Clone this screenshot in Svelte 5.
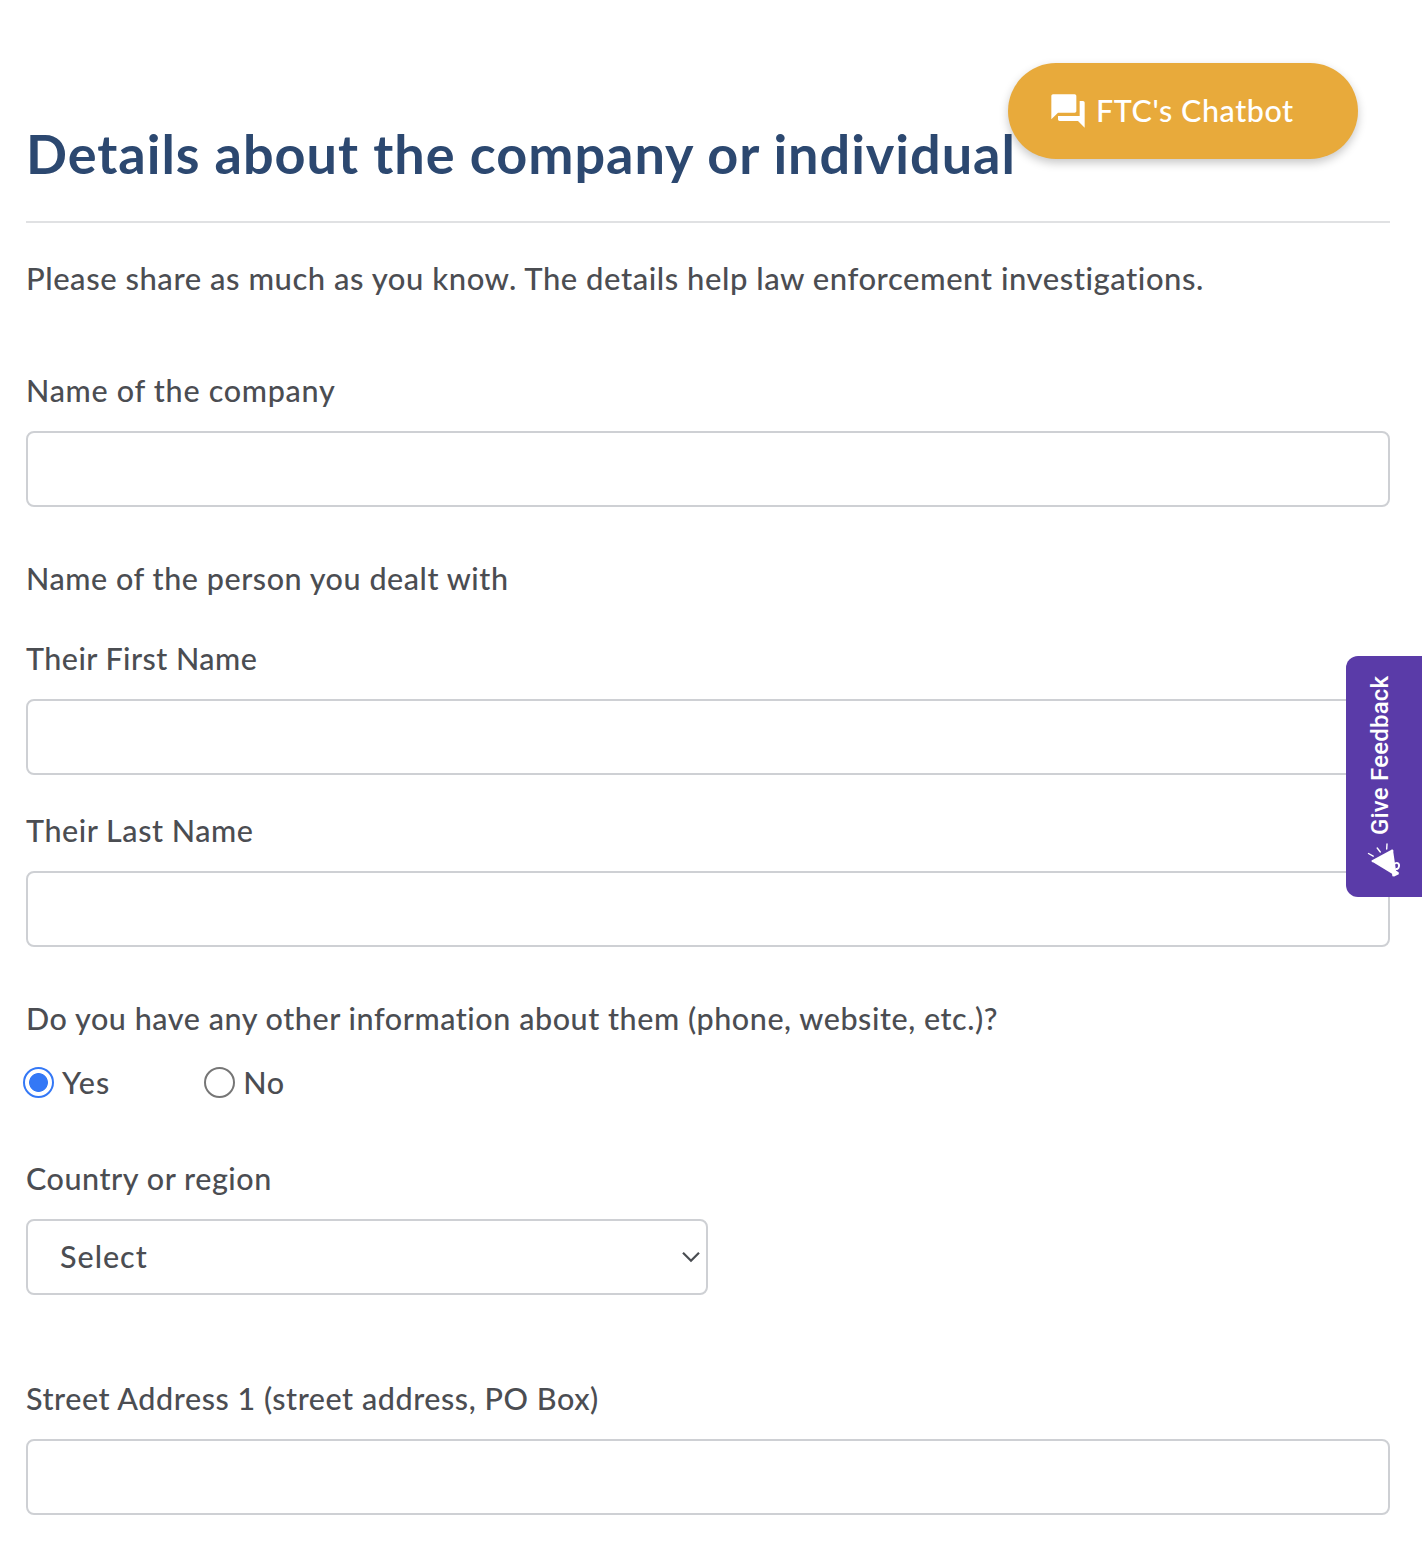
<script lang="ts">
	let company = $state('');
	let firstName = $state('');
	let lastName = $state('');
	let moreInfo = $state('yes');
	let country = $state('');
	let street = $state('');
</script>

<main>
	<h1>Details about the company or individual</h1>
	<p class="intro">Please share as much as you know. The details help law enforcement investigations.</p>

	<form>
		<div class="field company">
			<label for="company">Name of the company</label>
			<input id="company" type="text" bind:value={company} />
		</div>

		<div class="group" role="group" aria-labelledby="person">
			<p id="person" class="group-title">Name of the person you dealt with</p>
			<div class="field first">
				<label for="first-name">Their First Name</label>
				<input id="first-name" type="text" bind:value={firstName} />
			</div>
			<div class="field">
				<label for="last-name">Their Last Name</label>
				<input id="last-name" type="text" bind:value={lastName} />
			</div>
		</div>

		<div class="question" role="radiogroup" aria-labelledby="more-info">
			<p id="more-info">Do you have any other information about them (phone, website, etc.)?</p>
			<div class="options">
				<label class="option"><input type="radio" name="more" value="yes" bind:group={moreInfo} /><span>Yes</span></label>
				<label class="option"><input type="radio" name="more" value="no" bind:group={moreInfo} /><span>No</span></label>
			</div>
		</div>

		<div class="field country">
			<label for="country">Country or region</label>
			<div class="select-wrap">
				<select id="country" bind:value={country}>
					<option value="">Select</option>
				</select>
				<svg class="caret" width="20" height="12" viewBox="0 0 20 12" fill="none" stroke="#494c51" stroke-width="2.2">
					<path d="M2 1.8 10 9.8 18 1.8" />
				</svg>
			</div>
		</div>

		<div class="field street">
			<label for="street">Street Address 1 (street address, PO Box)</label>
			<input id="street" type="text" bind:value={street} />
		</div>
	</form>
</main>

<button class="chatbot" type="button">
	<svg width="40" height="40" viewBox="0 0 24 24" fill="currentColor">
		<path d="M21 6h-2v9H6v2c0 .55.45 1 1 1h11l4 4V7c0-.55-.45-1-1-1zm-4 6V3c0-.55-.45-1-1-1H3c-.55 0-1 .45-1 1v14l4-4h10c.55 0 1-.45 1-1z" />
	</svg>
	<span>FTC's Chatbot</span>
</button>

<button class="feedback" type="button">
	<span>Give Feedback</span>
	<svg width="34" height="36" viewBox="0 0 34 36" fill="none" stroke="#fff">
		<path d="M1.5 11.5 6.2 14.2M10.2 6 13.3 10M20 2 19.7 7" stroke-width="1.4" stroke-linecap="round" />
		<path d="M4.5 18.5 24 8 25.2 7.2 26.5 8.5 26.3 10 29 28.5 31.8 30.5 31.8 32.3 27.2 34.6 25.4 34.2 25 31.8 6.5 20.5 4.8 20Z" fill="#fff" stroke="none" />
		<path d="M27.2 22.2C29.5 19.6 32.6 21.2 32 24.4 31.5 27 29.6 27.4 28.4 26.8" stroke-width="1.9" />
	</svg>
</button>

<style>
	:global(body) {
		background: #fff;
		color: #4b4d52;
		font-family: Lato, "Open Sans", sans-serif;
		font-size: 30.5px;
		font-weight: 500;
		line-height: 46px;
		letter-spacing: 0.56px;
	}

	main {
		padding: 121px 32px 42px 26px;
	}

	h1 {
		margin: 0 0 32px;
		padding-bottom: 35px;
		border-bottom: 2px solid #e0e1e3;
		color: #2c4870;
		font-size: 54px;
		font-weight: 700;
		line-height: 65px;
		letter-spacing: 0.98px;
		white-space: nowrap;
	}

	p {
		margin: 0;
		padding-bottom: 2px;
		white-space: nowrap;
	}

	label {
		padding-bottom: 2px;
	}

	.intro {
		margin-bottom: 64px;
		font-size: 31px;
		letter-spacing: 0.54px;
	}

	.field {
		display: flex;
		flex-direction: column;
		gap: 16px;
		margin-bottom: 32px;
	}

	.company {
		margin-bottom: 48px;
	}

	.company label {
		letter-spacing: 0.72px;
	}

	.first label {
		letter-spacing: 0.46px;
	}

	.group-title {
		margin-bottom: 32px;
	}

	.group {
		margin-bottom: 48px;
	}

	input[type="text"],
	select {
		box-sizing: border-box;
		width: 100%;
		height: 76px;
		margin: 0;
		padding: 0 32px;
		border: 2px solid #ced0d4;
		border-radius: 8px;
		background: #fff;
		color: inherit;
		font: inherit;
		letter-spacing: inherit;
		outline: none;
	}

	.question {
		margin-bottom: 48px;
	}

	.options {
		display: flex;
		gap: 94px;
		margin: 16px 0 0 -3px;
	}

	.option {
		display: flex;
		align-items: center;
		gap: 8px;
	}

	.option:first-child {
		letter-spacing: 1px;
	}

	input[type="radio"] {
		appearance: none;
		box-sizing: border-box;
		width: 31px;
		height: 31px;
		margin: 0;
		border: 2px solid #767676;
		border-radius: 50%;
		background: #fff;
	}

	input[type="radio"]:checked {
		border-color: #3478f6;
		background: radial-gradient(circle, #3478f6 9px, #fff 9.8px);
	}

	.country {
		margin-bottom: 80px;
	}

	.select-wrap {
		position: relative;
		width: 682px;
		height: 76px;
	}

	select {
		appearance: none;
		padding-bottom: 2px;
		letter-spacing: 1px;
	}

	.caret {
		position: absolute;
		top: 32px;
		right: 7px;
		pointer-events: none;
	}

	.street {
		margin-bottom: 0;
	}

	.chatbot {
		position: absolute;
		top: 63px;
		left: 1008px;
		display: flex;
		align-items: center;
		gap: 8px;
		width: 350px;
		height: 96px;
		padding: 0 40px;
		border: 0;
		border-radius: 48px;
		background: #e8aa3b;
		box-shadow: 0 4px 10px rgba(0, 0, 0, 0.22);
		color: #fff;
		font: inherit;
		letter-spacing: inherit;
		white-space: nowrap;
	}

	.chatbot span {
		padding-bottom: 3px;
	}

	.feedback {
		position: absolute;
		top: 655.5px;
		right: 0;
		display: flex;
		flex-direction: column;
		align-items: center;
		gap: 7px;
		width: 76px;
		height: 241px;
		padding: 19px 0 0;
		border: 0;
		border-radius: 12px 0 0 12px;
		background: #5a3ba8;
		color: #fff;
		font: 500 24px Roboto, sans-serif;
		letter-spacing: 0.2px;
	}

	.feedback span {
		height: 160px;
		margin-right: 8px;
		writing-mode: vertical-rl;
		transform: rotate(180deg);
		white-space: nowrap;
	}
</style>
